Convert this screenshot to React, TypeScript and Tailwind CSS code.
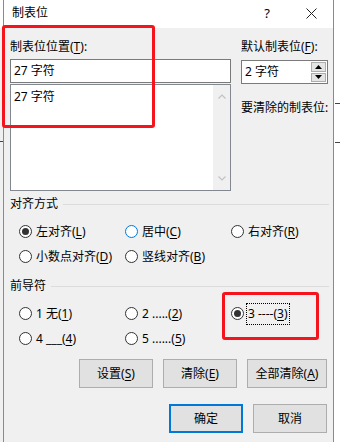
import type { ReactNode } from 'react';

const FONT = "font-['Segoe_UI','Noto_Sans','Noto_Sans_CJK_SC',sans-serif]";

function U({ children }: { children: ReactNode }) {
  return <span className="underline underline-offset-[2px]">{children}</span>;
}

function Radio({ checked = false, hover = false, focus = false, children }: { checked?: boolean; hover?: boolean; focus?: boolean; children: ReactNode }) {
  return (
    <div className="flex items-center h-[25px] w-[106px]">
      <div
        className={
          'w-[13px] h-[13px] rounded-full border bg-white flex items-center justify-center shrink-0 ' +
          (hover ? 'border-[#0078d7]' : 'border-[#333333]')
        }
      >
        {checked && <div className="w-[7px] h-[7px] rounded-full bg-[#333333]" />}
      </div>
      {focus ? (
        <span className="ml-[2px] pl-[1px] pr-[1px] h-[22px] leading-[20px] border border-dotted border-black whitespace-nowrap">
          {children}
        </span>
      ) : (
        <span className="ml-[4px] whitespace-nowrap leading-[16px]">{children}</span>
      )}
    </div>
  );
}

function Button({ primary = false, w, children }: { primary?: boolean; w: string; children: ReactNode }) {
  return (
    <div
      className={
        'h-[29px] flex items-center justify-center bg-[#e1e1e1] ' +
        w +
        (primary ? ' border-2 border-[#0078d7]' : ' border border-[#adadad]')
      }
    >
      {children}
    </div>
  );
}

function GroupHeader({ title }: { title: string }) {
  return (
    <div className="flex items-center h-[16px]">
      <span className="leading-[16px]">{title}</span>
      <div className="flex-1 h-px bg-[#dcdcdc] ml-[5px]" />
    </div>
  );
}

function Chevron({ up }: { up?: boolean }) {
  return (
    <svg width="8" height="5" viewBox="0 0 8 5">
      <path d={up ? 'M0.5 4.5L4 1L7.5 4.5' : 'M0.5 0.5L4 4L7.5 0.5'} fill="none" stroke="#c2c2c2" strokeWidth="1.2" />
    </svg>
  );
}

export default function App() {
  return (
    <div className={`relative w-[340px] h-[442px] flex bg-white text-[12px] text-black overflow-hidden ${FONT}`}>
      {/* left edge outside dialog */}
      <div className="relative w-[3px] flex flex-col">
        <div className="h-[28px] bg-white" />
        <div className="flex-1 bg-[#f0f0f0]" />
        <div className="absolute left-0 top-[141px] w-[3px] h-px bg-[#444]" />
      </div>

      {/* dialog */}
      <div className="w-[331px] flex flex-col border-x border-[#8a8a8a]">
        {/* title bar */}
        <div className="h-[28px] bg-white flex items-center pl-[8px]">
          <span className="leading-[16px] mt-[-2px]">制表位</span>
          <span className="ml-auto text-[13px] leading-[16px] mt-[-2px]">?</span>
          <svg className="ml-[36px] mr-[16px] mt-[-1px]" width="11" height="11" viewBox="0 0 11 11">
            <path d="M0.5 0.5L10.5 10.5M10.5 0.5L0.5 10.5" stroke="#222" strokeWidth="1" />
          </svg>
        </div>

        {/* body */}
        <div className="flex-1 bg-[#f0f0f0] pl-[6px] pr-[4px] pt-[11px] flex flex-col">
          {/* top section */}
          <div className="flex">
            <div className="w-[221px] flex flex-col">
              <div className="leading-[16px]">
                制表位位置(<U>T</U>):
              </div>
              <div className="mt-[4px] h-[24px] bg-white border border-[#7a7a7a] flex items-center pl-[3px]">
                27 字符
              </div>
              <div className="mt-[1px] h-[107px] bg-white border border-[#828790] flex">
                <div className="flex-1 pl-[3px] pt-[4px] leading-[16px]">27 字符</div>
                <div className="w-[17px] bg-[#f0f0f0] flex flex-col items-center justify-between pt-[9px] pb-[9px]">
                  <Chevron up />
                  <Chevron />
                </div>
              </div>
            </div>

            <div className="ml-[10px] w-[87px] flex flex-col">
              <div className="leading-[16px] whitespace-nowrap">
                默认制表位(<U>F</U>):
              </div>
              <div className="mt-[5px] h-[24px] bg-white border border-[#7a7a7a] flex">
                <div className="flex-1 flex items-center pl-[3px]">2 字符</div>
                <div className="flex flex-col gap-[1px] py-[1px] pr-[1px]">
                  <div className="w-[15px] h-[10px] border border-[#adadad] bg-[#e5e5e5] flex items-center justify-center">
                    <svg width="7" height="4" viewBox="0 0 7 4">
                      <path d="M0 4L3.5 0L7 4Z" fill="#000" />
                    </svg>
                  </div>
                  <div className="w-[15px] h-[10px] border border-[#adadad] bg-[#e5e5e5] flex items-center justify-center">
                    <svg width="7" height="4" viewBox="0 0 7 4">
                      <path d="M0 0L3.5 4L7 0Z" fill="#000" />
                    </svg>
                  </div>
                </div>
              </div>
              <div className="mt-[16px] leading-[16px] whitespace-nowrap">要清除的制表位:</div>
            </div>
          </div>

          {/* alignment */}
          <div className="mt-[5px]">
            <GroupHeader title="对齐方式" />
          </div>
          <div className="mt-[7px] pl-[9px] grid grid-cols-[106px_106px_106px]">
            <Radio checked>
              左对齐(<U>L</U>)
            </Radio>
            <Radio hover>
              居中(<U>C</U>)
            </Radio>
            <Radio>
              右对齐(<U>R</U>)
            </Radio>
            <Radio>
              小数点对齐(<U>D</U>)
            </Radio>
            <Radio>
              竖线对齐(<U>B</U>)
            </Radio>
          </div>

          {/* leader */}
          <div className="mt-[9px]">
            <GroupHeader title="前导符" />
          </div>
          <div className="mt-[7px] pl-[9px] grid grid-cols-[106px_106px_106px]">
            <Radio>
              1 无(<U>1</U>)
            </Radio>
            <Radio>
              2 .....(<U>2</U>)
            </Radio>
            <Radio checked focus>
              3 ----(<U>3</U>)
            </Radio>
            <Radio>
              4 ___(<U>4</U>)
            </Radio>
            <Radio>
              5 ......(<U>5</U>)
            </Radio>
          </div>

          {/* action buttons */}
          <div className="mt-[8px] flex justify-end gap-[10px] pr-[2px]">
            <Button w="w-[74px]">
              设置(<U>S</U>)
            </Button>
            <Button w="w-[74px]">
              清除(<U>E</U>)
            </Button>
            <Button w="w-[80px]">
              全部清除(<U>A</U>)
            </Button>
          </div>
          <div className="mt-[16px] flex justify-end gap-[10px] pr-[2px]">
            <Button primary w="w-[74px]">确定</Button>
            <Button w="w-[74px]">取消</Button>
          </div>
        </div>
      </div>

      {/* right edge outside dialog */}
      <div className="relative flex-1 bg-white">
        <div className="absolute left-[1px] top-[103px] w-[6px] h-px bg-[#444]" />
        <div className="absolute left-[1px] top-[142px] w-[6px] h-px bg-[#444]" />
      </div>

      {/* red annotation boxes */}
      <div className="absolute left-[2px] top-[25px] w-[153px] h-[103px] border-[3px] border-[#f5141b] rounded-[3px]" />
      <div className="absolute left-[222px] top-[292px] w-[97px] h-[48px] border-[3px] border-[#f5141b] rounded-[3px]" />
    </div>
  );
}
